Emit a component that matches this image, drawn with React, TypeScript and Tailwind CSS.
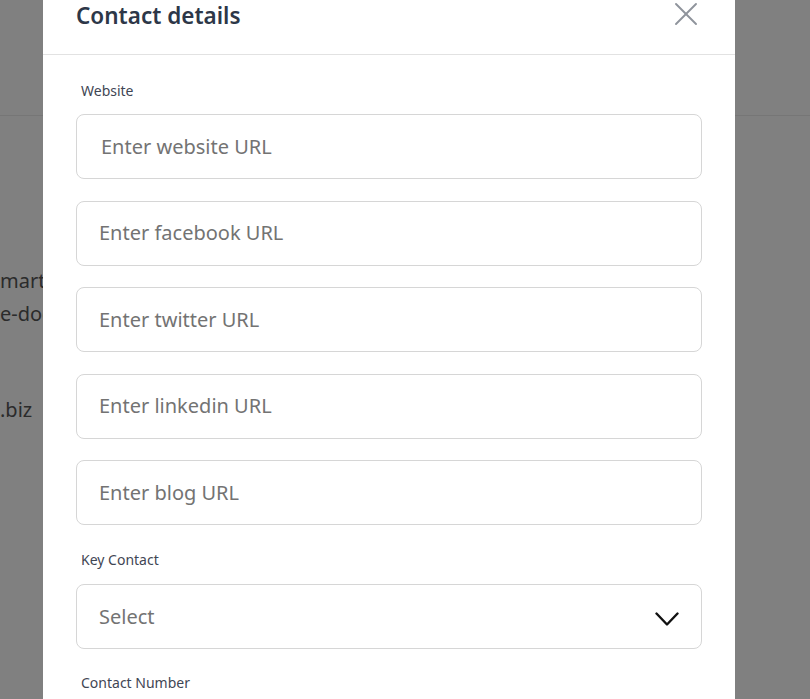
import { X } from 'lucide-react'

const urlFields = [
  'Enter website URL',
  'Enter facebook URL',
  'Enter twitter URL',
  'Enter linkedin URL',
  'Enter blog URL',
]

/** Contact details modal over a dimmed page */
export default function App() {
  return (
    <div className="relative h-[699px] w-full overflow-hidden bg-[#808080] font-['Noto_Sans',sans-serif]">
      {/* page behind the overlay */}
      <div className="h-[116px] border-b border-[#767676]" />
      <div className="flex flex-col pt-[155px] text-[20px] leading-none text-[#2b2b2b]">
        <span>martin</span>
        <span className="mt-[13px]">e-docs</span>
        <span className="mt-[76px]">.biz</span>
      </div>

      {/* modal */}
      <div className="absolute left-[43px] top-0 h-full w-[692px] bg-white">
        <div className="flex h-[55px] items-start justify-between border-b border-[#e2e2e2] pl-[33px] pr-[29px]">
          <h2 className="-mt-[1px] text-[22.5px] font-semibold text-[#2d3748]">Contact details</h2>
          <X className="-mt-[6px] h-[40px] w-[40px] text-[#8f949c]" strokeWidth={1.15} />
        </div>

        <div className="flex flex-col px-[33px] pt-[25px]">
          <label className="ml-[5px] text-[14px] text-[#3f4654]">Website</label>
          <div className="mt-[13px] flex flex-col gap-[21.5px]">
            {urlFields.map((p, i) => (
              <div
                key={p}
                className={`flex h-[65px] w-[626px] items-center rounded-[8px] border border-[#d6d6d6] ${i === 0 ? 'pl-[24px]' : 'pl-[22px]'} text-[20px] text-[#737373]`}
              >
                {p}
              </div>
            ))}
          </div>

          <label className="ml-[5px] mt-[24px] text-[14px] text-[#3f4654]">Key Contact</label>
          <div className="mt-[14px] flex h-[65px] w-[626px] items-center justify-between rounded-[8px] border border-[#d6d6d6] pl-[22px] pr-[22px] text-[20px] text-[#737373]">
            <span>Select</span>
            <svg width="24" height="15" viewBox="0 0 24 15" fill="none" className="mt-[5px]">
              <polyline points="1.5,1.5 12,12.5 22.5,1.5" stroke="#111" strokeWidth="2.4" strokeLinecap="round" strokeLinejoin="round" />
            </svg>
          </div>

          <label className="ml-[5px] mt-[23px] text-[14px] text-[#3f4654]">Contact Number</label>
        </div>
      </div>
    </div>
  )
}
